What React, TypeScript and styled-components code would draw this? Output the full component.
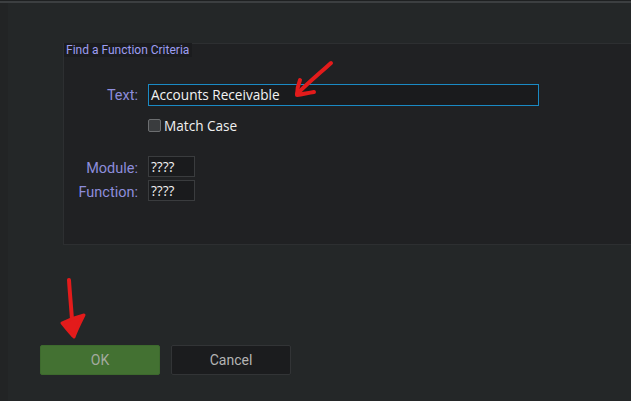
import React from "react";
import styled, { createGlobalStyle } from "styled-components";

const Global = createGlobalStyle`
  html, body { margin: 0; padding: 0; background: #232627; }
  body { font-family: "Open Sans", "Noto Sans", Arial, sans-serif; }
  * { box-sizing: border-box; }
`;

const Page = styled.div`
  position: relative;
  width: 631px;
  height: 401px;
  background: #242728;
  border-top: 1px solid #1e2021;
  overflow: hidden;
  display: flex;
  flex-direction: column;
`;

const TopRule = styled.div`
  height: 2px;
  background: #3c3f41;
  flex-shrink: 0;
`;

const Body = styled.div`
  display: flex;
  flex-direction: column;
  padding: 40px 0 0 55px;
  border-left: 8px solid #222425;
  flex: 1;
`;

const Panel = styled.section`
  height: 202px;
  background: #202123;
  border: 1px solid #2d2f31;
  border-right: none;
  display: flex;
  flex-direction: column;
`;

const Legend = styled.div`
  align-self: flex-start;
  background: #1b1c1e;
  color: #9e9ef2;
  font-family: "Roboto", Arial, sans-serif;
  font-size: 12px;
  line-height: 14px;
  padding: 0 3px 0 2px;
  margin-top: -1px;
`;

const Form = styled.div`
  display: grid;
  grid-template-columns: 74px auto;
  column-gap: 10px;
  align-items: center;
  padding-top: 27px;
`;

const Label = styled.label`
  color: #8d8ddc;
  font-family: "Roboto", Arial, sans-serif;
  font-size: 14.5px;
  text-align: right;
`;

const Input = styled.div<{ $w: number; $focus?: boolean }>`
  width: ${(p) => p.$w}px;
  height: ${(p) => (p.$focus ? 22 : 21)}px;
  background: #1a1b1d;
  border: 1px solid ${(p) => (p.$focus ? "#1a8ac4" : "#3a3c3e")};
  color: #f2f2f2;
  font-family: "Open Sans", Arial, sans-serif;
  font-size: 13.6px;
  line-height: 19px;
  padding-left: 2px;
  white-space: nowrap;
`;

const Spacer = styled.div``;

const CheckRow = styled.div`
  display: flex;
  align-items: center;
  gap: 3px;
  margin-top: 10px;
  margin-bottom: 21px;
  color: #f0f0f0;
  font-family: "Open Sans", Arial, sans-serif;
  font-size: 13.6px;
`;

const Box = styled.span`
  width: 13px;
  height: 13px;
  border: 1px solid #6c6e70;
  border-radius: 2px;
  background: #3a3c3e;
`;

const SmallRow = styled.div`
  margin-bottom: 3px;
`;

const Buttons = styled.div`
  display: flex;
  gap: 11px;
  margin-top: 100px;
  margin-left: -23px;
`;

const Button = styled.button<{ $primary?: boolean }>`
  width: 120px;
  height: 30px;
  border-radius: 2px;
  border: 1px solid ${(p) => (p.$primary ? "#3d6a2d" : "#323436")};
  background: ${(p) => (p.$primary ? "#437132" : "#1b1c1e")};
  color: ${(p) => (p.$primary ? "#a3aa9f" : "#b4b4b4")};
  font-family: "Roboto", Arial, sans-serif;
  font-size: 14px;
`;

const Overlay = styled.svg`
  position: absolute;
  left: 0;
  top: 0;
  pointer-events: none;
`;

export default function App() {
  return (
    <>
      <Global />
      <Page>
        <TopRule />
        <Body>
          <Panel>
            <Legend>Find a Function Criteria</Legend>
            <Form>
              <Label>Text:</Label>
              <Input $w={391} $focus>Accounts Receivable</Input>
              <Spacer />
              <CheckRow>
                <Box />
                Match Case
              </CheckRow>
              <Label>Module:</Label>
              <SmallRow>
                <Input $w={47}>????</Input>
              </SmallRow>
              <Label>Function:</Label>
              <SmallRow>
                <Input $w={47}>????</Input>
              </SmallRow>
            </Form>
          </Panel>
          <Buttons>
            <Button $primary>OK</Button>
            <Button>Cancel</Button>
          </Buttons>
        </Body>
        <Overlay width="631" height="401" viewBox="0 0 631 401">
          <g stroke="#e31b1b" strokeWidth="4" fill="none" strokeLinecap="round" strokeLinejoin="round">
            <path d="M331 62 C320 72 308 82 297 93" />
            <path d="M300 79 C298 84 297 89 297 94 C303 93 308 92 314 91" />
            <path d="M69 279 C70 295 72 315 73 334" />
          </g>
          <path d="M62 322 C66 327 70 332 74 336 C76 330 80 322 84 314 C76 316 68 319 62 322 Z" fill="#e31b1b" stroke="#e31b1b" strokeWidth="3" strokeLinejoin="round" />
        </Overlay>
      </Page>
    </>
  );
}
